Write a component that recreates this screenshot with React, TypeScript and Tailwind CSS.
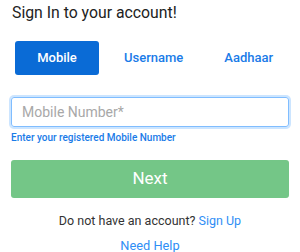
export default function App() {
  return (
    <div className="h-[252px] w-[300px] overflow-hidden bg-white font-['Roboto',sans-serif]">
      <h1 className="ml-3 mt-[2px] text-[15.8px] leading-[22px] text-[#222]">Sign In to your account!</h1>

      <div className="mt-[17px] flex items-center pl-[15px]">
        <button className="h-[34px] w-[84px] rounded-[3px] bg-[#0a6bd6] text-[13px] font-medium text-white">
          Mobile
        </button>
        <button className="ml-[25px] h-[34px] text-[13px] font-medium text-[#1a7be8]">Username</button>
        <button className="ml-[41px] h-[34px] text-[13px] font-medium text-[#1a7be8]">Aadhaar</button>
      </div>

      <div className="mx-[11px] mt-[22px]">
        <input
          placeholder="Mobile Number*"
          className="h-[30px] w-full rounded-[3px] border border-[#80bdff] px-[10px] text-[14px] text-[#333] shadow-[0_0_0_2px_rgba(0,123,255,0.2)] outline-none placeholder:text-[#a8a8a8]"
        />
        <p className="mt-[4px] text-[10px] font-medium leading-[14px] text-[#1a7be8]">
          Enter your registered Mobile Number
        </p>
        <button className="mt-[15px] h-[38px] w-full rounded-[3px] bg-[#74c687] text-[17px] text-white">
          Next
        </button>
      </div>

      <p className="mt-[13px] text-center text-[12.5px] leading-[20px] text-[#333]">
        Do not have an account? <span className="text-[#2f8ef5]">Sign Up</span>
      </p>
      <p className="mt-[9px] text-center text-[12.8px] leading-[12px] text-[#2f8ef5]">Need Help</p>
    </div>
  );
}
